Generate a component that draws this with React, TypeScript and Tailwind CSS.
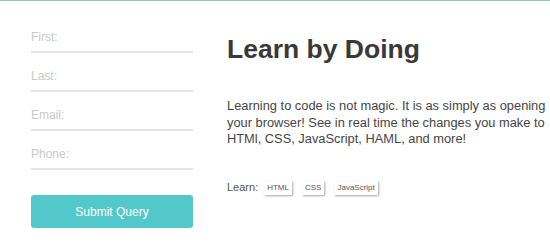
const fields = ["First:", "Last:", "Email:", "Phone:"];
const tags = ["HTML", "CSS", "JavaScript"];

export default function App() {
  return (
    <div className="min-h-screen bg-white border-t border-[#88cdb9] font-['Liberation_Sans',Arial,sans-serif]">
      <div className="flex pl-[31px]">
        {/* Signup form */}
        <form className="w-[162px] shrink-0 pt-[21px] flex flex-col gap-[8px]" onSubmit={(e) => e.preventDefault()}>
          {fields.map((f) => (
            <input
              key={f}
              type="text"
              placeholder={f}
              className="h-[31px] w-full border-b-2 border-[#e4e4e4] bg-transparent text-[12px] text-[#555] placeholder:text-[#c9c9c9] outline-none"
            />
          ))}
          <button
            type="submit"
            className="mt-[17px] h-[33px] w-full rounded-[3px] bg-[#53c8ca] text-[12px] text-white"
          >
            Submit Query
          </button>
        </form>

        {/* Intro */}
        <div className="ml-[34px] pt-[33px]">
          <h1 className="text-[26.5px] font-bold leading-[30px] text-[#393939] whitespace-nowrap">Learn by Doing</h1>
          <p className="mt-[34px] whitespace-nowrap text-[12.85px] leading-[16.5px] text-[#454545]">
            Learning to code is not magic. It is as simply as opening
            <br />
            your browser! See in real time the changes you make to
            <br />
            HTMl, CSS, JavaScript, HAML, and more!
          </p>
          <div className="mt-[33px] flex items-center h-[14px] text-[11px] text-[#555]">
            <span className="mr-[6px]">Learn:</span>
            {tags.map((t) => (
              <span
                key={t}
                className="mr-[10px] h-[14px] px-[3px] bg-white text-[8px] leading-[14px] text-[#555] shadow-[1px_1px_2px_rgba(0,0,0,0.35)]"
              >
                {t}
              </span>
            ))}
          </div>
        </div>
      </div>
    </div>
  );
}
